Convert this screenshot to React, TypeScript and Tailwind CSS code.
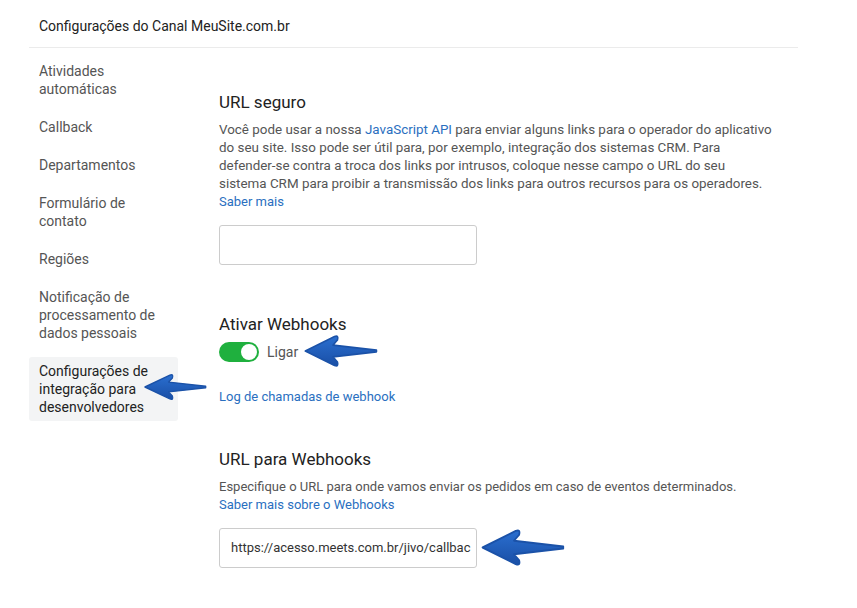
import React from 'react'

const menu = [
  ['Atividades', 'automáticas'],
  ['Callback'],
  ['Departamentos'],
  ['Formulário de', 'contato'],
  ['Regiões'],
  ['Notificação de', 'processamento de', 'dados pessoais'],
]

function Arrow({ className }: { className: string }) {
  return (
    <svg viewBox="0 0 100 40" preserveAspectRatio="none" className={`absolute ${className}`}>
      <defs>
        <linearGradient id="ag" x1="0" y1="0" x2="0" y2="1">
          <stop offset="0" stopColor="#2a6fd0" />
          <stop offset="1" stopColor="#1a4fa6" />
        </linearGradient>
      </defs>
      <path
        d="M3 20 L42 3 Q48 1 46 7 L40 13 L98 19 L98 21 L40 27 L46 33 Q48 39 42 37 Z"
        fill="url(#ag)"
        stroke="#1b52a8"
        strokeWidth="2"
        strokeLinejoin="round"
      />
    </svg>
  )
}

export default function App() {
  return (
    <div className="relative w-[857px] h-[608px] bg-white font-['Roboto',sans-serif] overflow-hidden">
      <div className="ml-[29px] w-[769px]">
        <div className="pl-[10px] pt-[17px] pb-[12px] border-b border-[#ebebeb] text-[14px] leading-[18px] text-[#222]">
          Configurações do Canal MeuSite.com.br
        </div>

        <div className="flex">
          <div className="w-[149px] pt-[9px] flex flex-col gap-[10px] text-[14px] leading-[18px] text-[#555]">
            {menu.map((lines) => (
              <div key={lines[0]} className="px-[10px] py-[5px]">
                {lines.map((l) => (
                  <div key={l}>{l}</div>
                ))}
              </div>
            ))}
            <div className="px-[10px] pt-[5px] pb-[5px] bg-[#f3f4f5] rounded-[3px] text-[#222]">
              <div>Configurações de</div>
              <div>integração para</div>
              <div>desenvolvedores</div>
            </div>
          </div>

          <div className="ml-[41px] w-[572px] pt-[43px]">
            <h2 className="text-[17px] leading-[22px] text-[#222]">URL seguro</h2>
            <p className="mt-[8px] text-[13.4px] leading-[18px] text-[#555] whitespace-nowrap">
              Você pode usar a nossa <span className="text-[#2a6fbf]">JavaScript API</span> para enviar alguns links para o operador do aplicativo
              <br />
              do seu site. Isso pode ser útil para, por exemplo, integração dos sistemas CRM. Para
              <br />
              defender-se contra a troca dos links por intrusos, coloque nesse campo o URL do seu
              <br />
              sistema CRM para proibir a transmissão dos links para outros recursos para os operadores.
            </p>
            <div className="text-[13px] leading-[18px] text-[#2a6fbf]">Saber mais</div>
            <div className="mt-[14px] w-[258px] h-[40px] border border-[#cccccc] rounded-[3px]" />

            <h2 className="mt-[48px] text-[17px] leading-[22px] text-[#222]">Ativar Webhooks</h2>
            <div className="mt-[7px] flex items-center gap-[8px]">
              <div className="w-[40px] h-[20px] rounded-full bg-[#1fb03e] flex items-center justify-end pr-[2px]">
                <div className="w-[16px] h-[16px] rounded-full bg-white" />
              </div>
              <span className="text-[14px] leading-[18px] text-[#555]">Ligar</span>
            </div>
            <div className="mt-[26px] text-[13px] leading-[18px] text-[#2a6fbf]">Log de chamadas de webhook</div>

            <h2 className="mt-[42px] text-[17px] leading-[22px] text-[#222]">URL para Webhooks</h2>
            <p className="mt-[8px] text-[13px] leading-[18px] text-[#555]">
              Especifique o URL para onde vamos enviar os pedidos em caso de eventos determinados.
            </p>
            <div className="text-[13px] leading-[18px] text-[#2a6fbf]">Saber mais sobre o Webhooks</div>
            <div className="mt-[14px] w-[258px] h-[40px] border border-[#cccccc] rounded-[3px] pl-[11px] flex items-center overflow-hidden whitespace-nowrap text-[13px] text-[#333]">
              https://acesso.meets.com.br/jivo/callbac
            </div>
          </div>
        </div>
      </div>

      <Arrow className="left-[303px] top-[334px] w-[75px] h-[34px]" />
      <Arrow className="left-[143px] top-[373px] w-[64px] h-[28px]" />
      <Arrow className="left-[480px] top-[528px] w-[85px] h-[39px]" />
    </div>
  )
}
